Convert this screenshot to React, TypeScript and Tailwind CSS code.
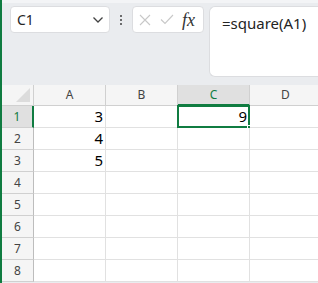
import React from "react";

const cols = ["A", "B", "C", "D"];
const rows = [1, 2, 3, 4, 5, 6, 7, 8];
const data: Record<string, string> = { A1: "3", A2: "4", A3: "5", C1: "9" };

export default function App() {
  return (
    <div
      className="relative w-[318px] h-[283px] overflow-hidden bg-[#eaecef] border-l-2 border-[#107c41]"
      style={{ fontFamily: '"Noto Sans", "Open Sans", sans-serif' }}
    >
      {/* toolbar */}
      <div className="h-[85px] flex items-start pt-[6px] pl-[8px] border-t-[3px] border-[#f3f4f6]">
        <div className="w-[100px] h-[27px] -mt-[3px] bg-white rounded-[4px] border border-[#dcdde0] flex items-center pl-[6px] pr-[5px] justify-between">
          <span className="text-[14px] text-[#242424] leading-none">C1</span>
          <svg width="12" height="8" viewBox="0 0 12 8" fill="none">
            <path d="M1.5 1.5 L6 6 L10.5 1.5" stroke="#424242" strokeWidth="1.3" />
          </svg>
        </div>
        <div className="w-[22px] h-[27px] -mt-[3px] flex flex-col items-center justify-center gap-[2px]">
          <div className="w-[2px] h-[2px] bg-[#424242] rounded-full" />
          <div className="w-[2px] h-[2px] bg-[#424242] rounded-full" />
          <div className="w-[2px] h-[2px] bg-[#424242] rounded-full" />
        </div>
        <div className="w-[72px] h-[27px] -mt-[3px] bg-white rounded-[4px] border border-[#dcdde0] flex items-center pl-[6px]">
          <svg width="12" height="12" viewBox="0 0 12 12" fill="none" className="mr-[9px]">
            <path d="M1 1 L11 11 M11 1 L1 11" stroke="#c8c8c8" strokeWidth="1.1" />
          </svg>
          <svg width="14" height="11" viewBox="0 0 14 11" fill="none" className="mr-[8px]">
            <path d="M1 5.5 L5 9.5 L13 1" stroke="#c8c8c8" strokeWidth="1.1" />
          </svg>
          <span
            className="text-[18px] italic text-[#333] leading-none"
            style={{ fontFamily: '"Liberation Serif", "DejaVu Serif", serif' }}
          >
            fx
          </span>
        </div>
        <div className="ml-[5px] -mt-[3px] flex-1 h-[71px] bg-white rounded-l-[6px] border border-r-0 border-[#dcdde0] pl-[12px] pt-[4px] -mr-[4px]">
          <span className="text-[15px] text-[#242424]">=square(A1)</span>
        </div>
      </div>
      {/* grid */}
      <div className="grid grid-cols-[32px_72px_72px_72px_72px] grid-rows-[21px_repeat(8,22px)]">
        <div className="relative bg-[#f5f5f5] border-r border-b border-[#d0d0d0]">
          <div className="absolute right-[3px] bottom-[3px] w-0 h-0 border-l-[14px] border-l-transparent border-b-[14px] border-b-[#dcdcdc]" />
        </div>
        {cols.map((c) => (
          <div
            key={c}
            className={
              c === "C"
                ? "flex items-center justify-center text-[12px] text-[#107c41] bg-[#e0e0e0] border-r border-[#d0d0d0] border-b-2 border-b-[#107c41]"
                : "flex items-center justify-center text-[12px] text-[#444] bg-[#f5f5f5] border-r border-b border-[#d0d0d0]"
            }
          >
            {c}
          </div>
        ))}
        {rows.map((r) => (
          <React.Fragment key={r}>
            <div
              className={
                r === 1
                  ? "flex items-center justify-center text-[12px] text-[#107c41] bg-[#e0e0e0] border-r-2 border-r-[#107c41] border-b border-b-[#d0d0d0]"
                  : "flex items-center justify-center text-[12px] text-[#444] bg-[#f5f5f5] border-r border-b border-[#bdbdbd] border-b-[#d0d0d0]"
              }
            >
              {r}
            </div>
            {cols.map((c) => {
              const key = `${c}${r}`;
              const sel = key === "C1";
              return (
                <div
                  key={key}
                  className="relative bg-white border-r border-b border-[#e1e1e1] flex items-center justify-end pr-[2px] text-[15px] text-[#000]"
                >
                  {data[key] ?? ""}
                  {sel && (
                    <>
                      <div className="absolute -left-[1px] -top-[1px] -right-[1px] -bottom-[1px] border-2 border-[#107c41]" />
                      <div className="absolute -right-[4px] -bottom-[4px] w-[6px] h-[6px] bg-[#107c41] border border-white" />
                    </>
                  )}
                </div>
              );
            })}
          </React.Fragment>
        ))}
      </div>
    </div>
  );
}
